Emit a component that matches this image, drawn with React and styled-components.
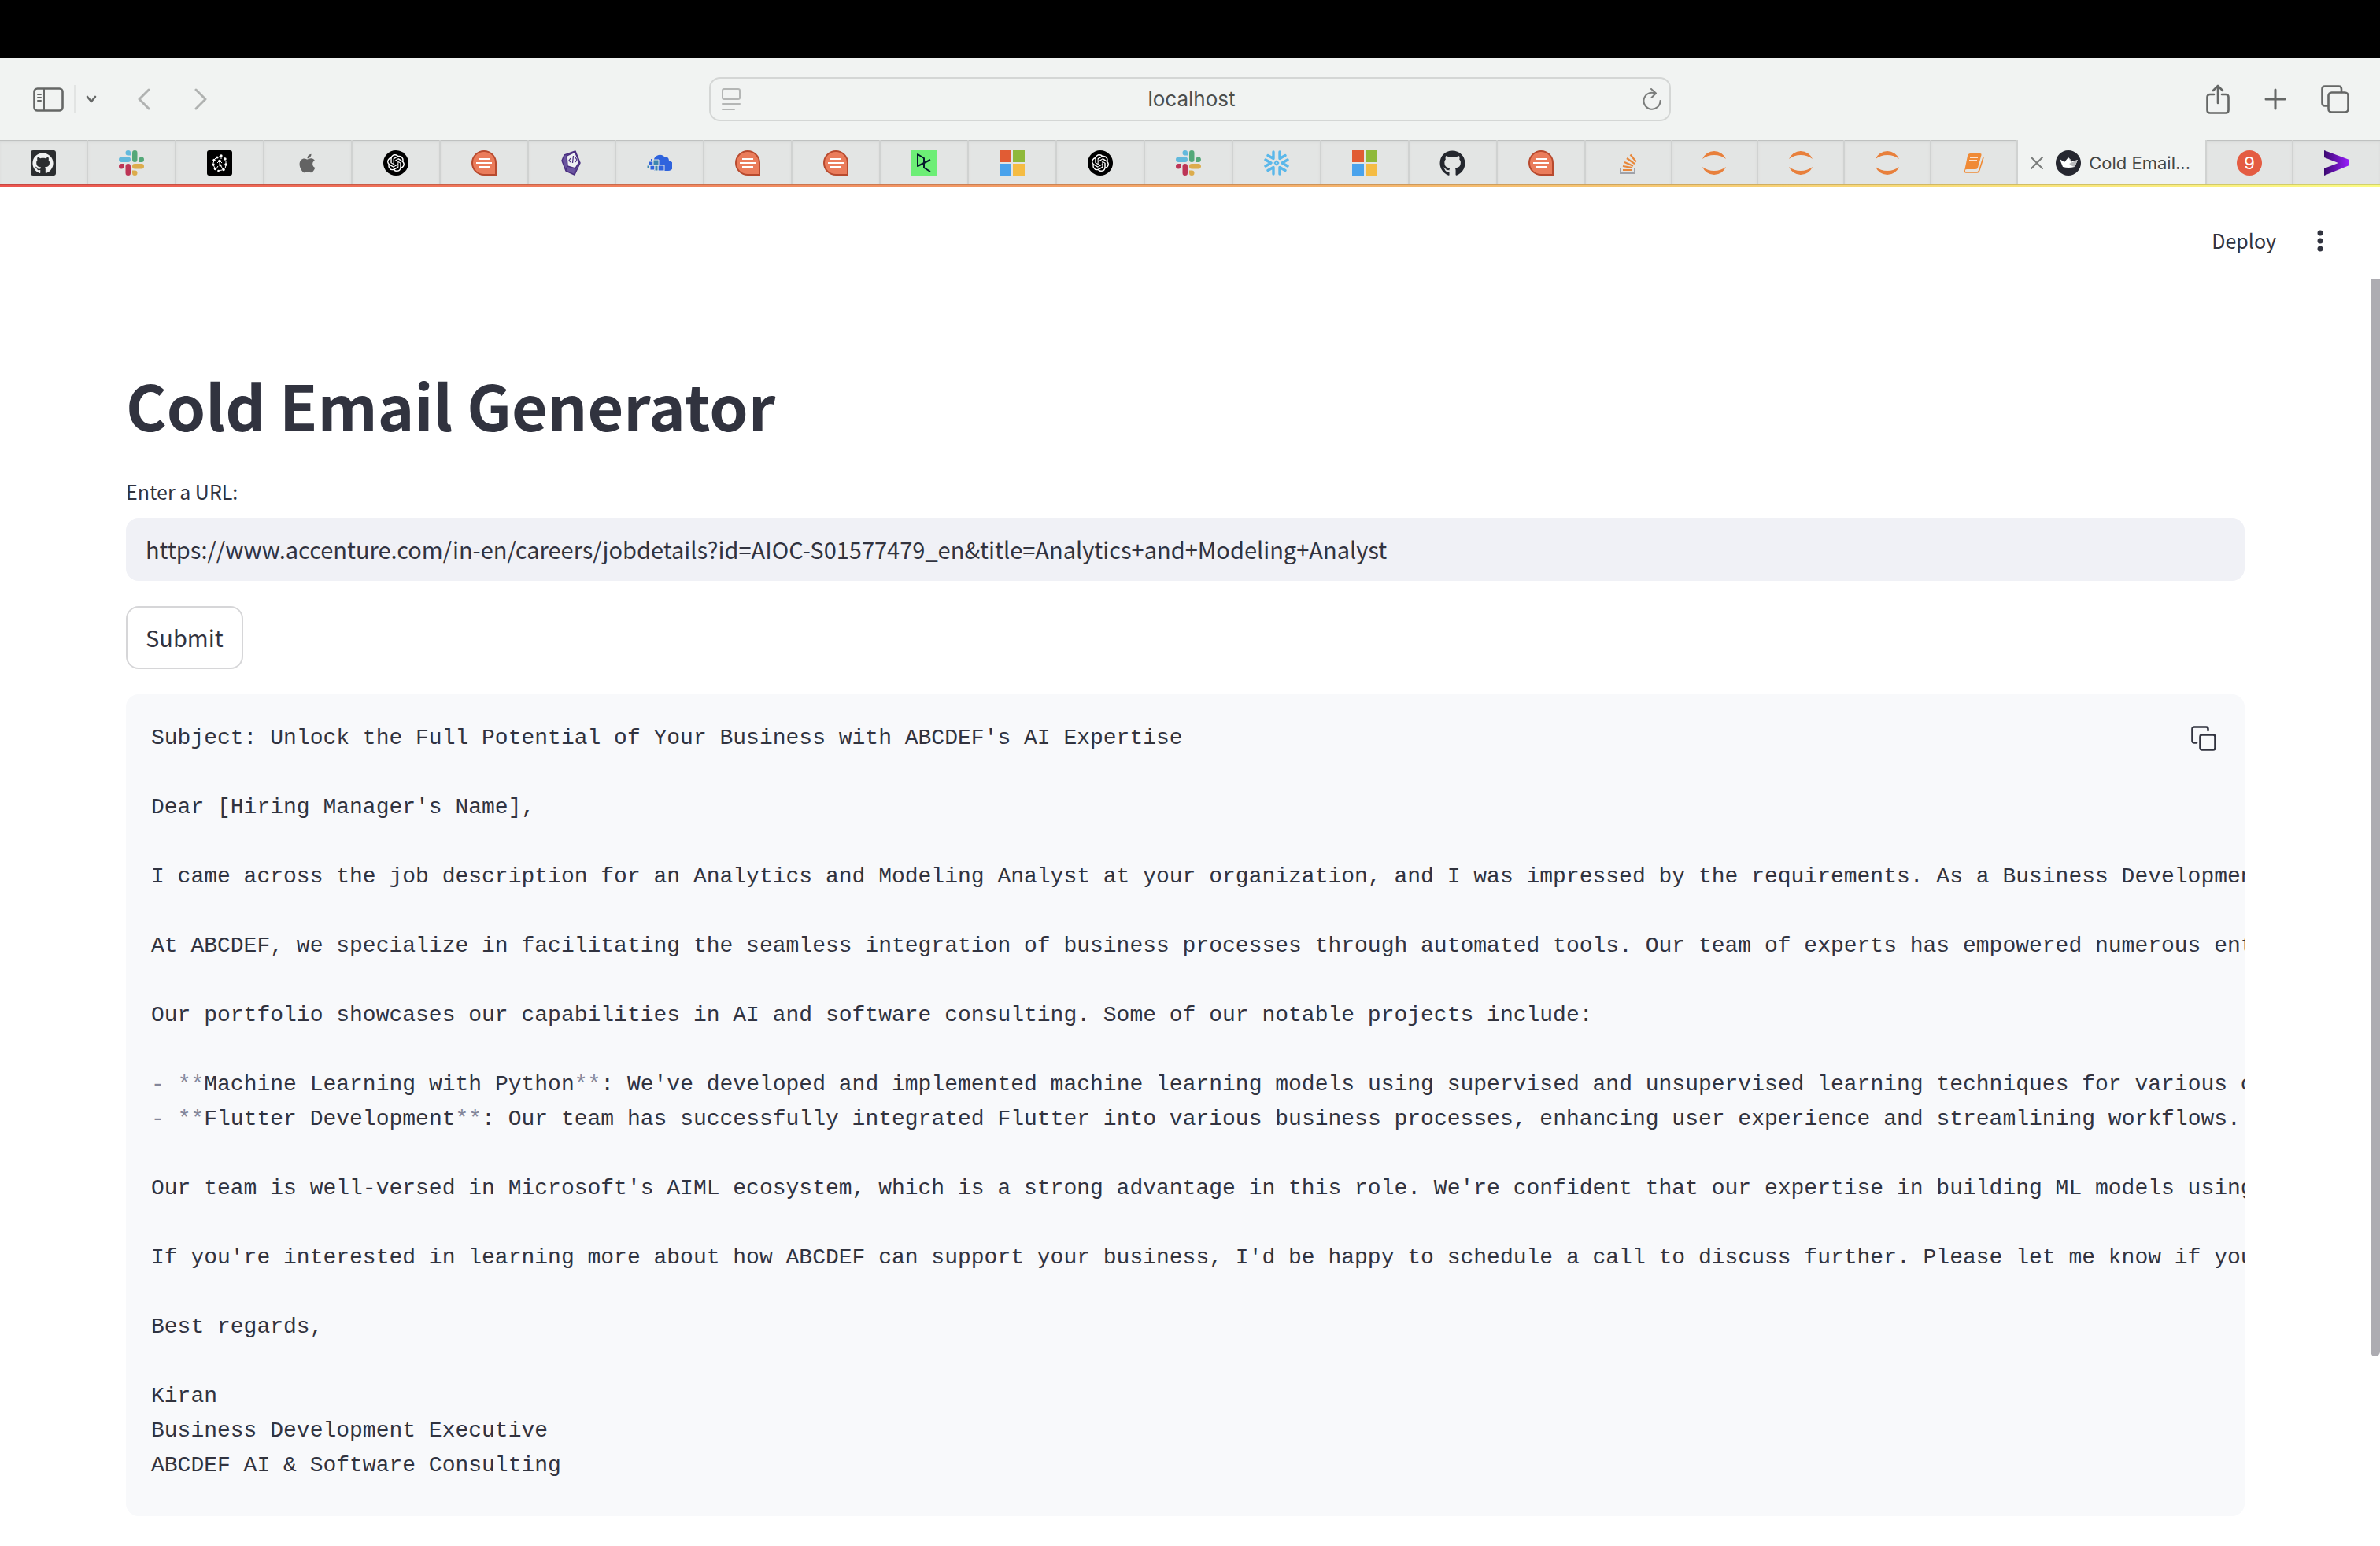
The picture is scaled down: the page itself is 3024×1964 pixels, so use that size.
import React from "react";
import styled, { createGlobalStyle } from "styled-components";
import { SiOpenai } from "react-icons/si";
import { FaApple, FaGithub } from "react-icons/fa";

const sans = `"Noto Sans CJK SC", "Open Sans", sans-serif`;
const system = `Inter, Roboto, sans-serif`;
const ink = "#31333f";

const GlobalStyle = createGlobalStyle`
  *, *::before, *::after { box-sizing: border-box; }
  body { margin: 0; background: #fff; color: ${ink}; font-family: ${sans}; }
  button, input, code { font: inherit; color: inherit; }
  svg { display: block; flex: none; }
`;

const Window = styled.div`
  display: flex;
  flex-direction: column;
  min-height: 100vh;
`;

const MenuBar = styled.div`
  height: 74px;
  background: #000;
`;

const Toolbar = styled.header`
  display: grid;
  grid-template-columns: 1fr minmax(0, 1222px) 1fr;
  align-items: center;
  height: 104px;
  background: #f1f3f2;
  color: #656766;
`;

const ToolGroup = styled.div`
  display: flex;
  align-items: center;
  justify-content: ${(p) => (p.$end ? "flex-end" : "flex-start")};
  gap: ${(p) => p.$gap}px;
  padding: 0 ${(p) => (p.$end ? 39 : 0)}px 0 ${(p) => (p.$end ? 0 : 42)}px;
`;

const IconButton = styled.button`
  display: flex;
  align-items: center;
  justify-content: center;
  padding: 0;
  border: 0;
  background: none;
  color: ${(p) => p.$color || "inherit"};
`;

const SidebarControl = styled.div`
  display: flex;
  align-items: center;
  gap: 13px;
`;

const HistoryControl = styled.div`
  display: flex;
  align-items: center;
  gap: 56px;
`;

const Divider = styled.span`
  width: 2px;
  height: 36px;
  background: #e2e4e3;
`;

const AddressBar = styled.div`
  display: flex;
  align-items: center;
  height: 56px;
  padding: 0 10px 0 14px;
  border: 2px solid #d4d6d5;
  border-radius: 14px;
`;

const AddressInput = styled.input`
  flex: 1;
  min-width: 0;
  padding: 0;
  border: 0;
  outline: 0;
  background: none;
  color: #4c4e4d;
  font-family: ${system};
  font-size: 26px;
  line-height: 32px;
  text-align: center;
`;

const TabStrip = styled.nav`
  display: flex;
  height: 56px;
  background: #e3e5e4;
`;

const Tab = styled.div`
  display: flex;
  align-items: center;
  justify-content: center;
  flex: 1 1 ${(p) => p.$basis}px;
  min-width: 0;
  padding-top: 2px;
  border-right: 2px solid #d0d2d1;
  box-shadow: inset 0 1px #bfc1c0, inset 0 3px 3px #d9dbda;
  &:last-child { border-right: 0; }
`;

const ActiveTab = styled(Tab)`
  flex: 0 0 240px;
  justify-content: flex-start;
  gap: 16px;
  padding-left: 16px;
  background: #f1f3f2;
  box-shadow: none;
`;

const TabLabel = styled.button`
  display: flex;
  align-items: center;
  gap: 10px;
  padding: 0;
  border: 0;
  background: none;
  color: #454746;
  font-family: ${system};
  font-size: 22px;
  line-height: 28px;
  white-space: nowrap;
`;

const Tile = styled.span`
  display: flex;
  align-items: center;
  justify-content: center;
  width: 32px;
  height: 32px;
  border-radius: ${(p) => p.$radius}px;
  background: ${(p) => p.$bg};
  color: ${(p) => p.$color || "#fff"};
  font-family: ${system};
  font-size: 22px;
  line-height: 32px;
`;

const Decoration = styled.div`
  height: 4px;
  background: linear-gradient(90deg, #ec554f, #fbfb82);
  box-shadow: inset 0 1px rgba(0, 0, 0, 0.16);
`;

const AppHeader = styled.header`
  display: flex;
  align-items: center;
  justify-content: flex-end;
  gap: 40px;
  height: 116px;
  padding: 20px 60px 0 0;
`;

const DeployButton = styled.button`
  padding: 0 0 2px;
  border: 0;
  background: none;
  font-size: 25px;
  line-height: 40px;
`;

const Scroller = styled.div`
  display: flex;
  flex: 1;
`;

const Content = styled.main`
  display: flex;
  flex-direction: column;
  flex: 1;
  min-width: 0;
  gap: 32px;
  padding: 112px 160px 38px;
`;

const ScrollRail = styled.div`
  flex: none;
  width: 12px;
`;

const ScrollThumb = styled.div`
  height: 85%;
  border-radius: 0 0 6px 6px;
  background: #adacb2;
`;

const Title = styled.h1`
  margin: 0 0 10px;
  font-size: 79px;
  line-height: 96px;
  font-weight: 700;
`;

const Field = styled.div`
  display: flex;
  flex-direction: column;
  gap: 14px;
`;

const FieldLabel = styled.label`
  font-size: 25px;
  line-height: 40px;
`;

const UrlInput = styled.input`
  width: 100%;
  height: 80px;
  padding: 0 25px 2px;
  border: 0;
  border-radius: 16px;
  outline: 0;
  background: #f0f1f6;
  font-size: 29px;
`;

const SubmitButton = styled.button`
  align-self: flex-start;
  height: 80px;
  padding: 0 23px 2px;
  border: 2px solid #d6d6d8;
  border-radius: 16px;
  background: #fff;
  font-size: 29px;
  line-height: 44px;
`;

const CodeBlock = styled.section`
  position: relative;
  border-radius: 16px;
  background: #f8f9fb;
`;

const Code = styled.pre`
  margin: 0;
  padding: 34px 0 42px 32px;
  overflow: hidden;
  font-family: "Liberation Mono", monospace;
  font-size: 28px;
  line-height: 44px;
`;

const Mark = styled.span`
  color: #83869a;
`;

const CopyButton = styled(IconButton)`
  position: absolute;
  top: 40px;
  right: 36px;
`;

const Icon = ({ w, h, sw = 2.6, children }) => (
  <svg
    width={w}
    height={h}
    viewBox={`0 0 ${w} ${h}`}
    fill="none"
    stroke="currentColor"
    strokeWidth={sw}
    strokeLinecap="round"
    strokeLinejoin="round"
    aria-hidden="true"
  >
    {children}
  </svg>
);

const Logo = ({ children }) => (
  <svg width="32" height="32" viewBox="0 0 32 32" fill="none" aria-hidden="true">
    {children}
  </svg>
);

const GithubTile = () => (
  <Tile $bg="#2b2d2f" $radius={3} $color="#f0f1f1">
    <FaGithub size={27} />
  </Tile>
);

const OpenAi = () => (
  <Tile $bg="#000" $radius={16}>
    <SiOpenai size={22} />
  </Tile>
);

const Slack = () => (
  <Logo>
    <g fill="#62b9dc">
      <rect y="8.5" width="15" height="6.5" rx="3.25" />
      <path d="M15 6.5h-3.25A3.25 3.25 0 1 1 15 3.25z" />
    </g>
    <g fill="#54a878">
      <rect x="17" width="6.5" height="15" rx="3.25" />
      <path d="M25.5 15v-3.25A3.25 3.25 0 1 1 28.75 15z" />
    </g>
    <g fill="#bd3556">
      <rect x="8.5" y="17" width="6.5" height="15" rx="3.25" />
      <path d="M6.5 17v3.25A3.25 3.25 0 1 1 3.25 17z" />
    </g>
    <g fill="#dcac4c">
      <rect x="17" y="17" width="15" height="6.5" rx="3.25" />
      <path d="M17 25.5h3.25A3.25 3.25 0 1 1 17 28.75z" />
    </g>
  </Logo>
);

const Network = () => (
  <Logo>
    <rect width="32" height="32" rx="3" fill="#000" />
    <g stroke="#fff" strokeWidth="1">
      <path d="M18 7v4M14 9l3-2M9 12l3-3M9 13l-1 3M16 14v4M21 9l3 2M24 13v4M24 19l-1 4M8 18l2 5M12 23l2-3M13 16l3-3 3 3M18 20l2 4M14 26l5-1" />
    </g>
    <g fill="#fff">
      <circle cx="18" cy="7" r="1.7" />
      <circle cx="13" cy="9" r="1.5" />
      <circle cx="23" cy="11" r="1.7" />
      <circle cx="9" cy="12.5" r="1.7" />
      <circle cx="16" cy="13.5" r="1.8" />
      <circle cx="8" cy="18" r="1.7" />
      <circle cx="24" cy="18" r="1.8" />
      <circle cx="17" cy="19" r="1.6" />
      <circle cx="10.5" cy="23.5" r="1.8" />
      <circle cx="21" cy="24.5" r="1.8" />
      <circle cx="14.5" cy="26" r="1.3" />
    </g>
  </Logo>
);

const Chat = () => (
  <Logo>
    <path d="M31 31H16A15 15 0 1 1 31 16z" fill="#ea7c5b" stroke="#b84a2e" strokeWidth="2" />
    <path d="M9 11h14M6 16h20M9 21h14" stroke="#fff" strokeWidth="2" />
  </Logo>
);

const Crystal = () => (
  <Logo>
    <path d="M21 1l6 15-7 15-11-5-5-13 3-7z" fill="#6b55a0" stroke="#4a2f80" strokeWidth="1.5" strokeLinejoin="round" />
    <path d="M20.500 2L26 15l-5 8-10-3-1-13z" fill="#eef0f2" stroke="#4a2f80" strokeWidth="1.5" strokeLinejoin="round" />
    <path d="M15 10l-2 3 2 2M18.500 7l-1 9M21 9l2 3-2 3M11 20l-2 5M21 23l-1 7" stroke="#4a2f80" strokeWidth="1.3" />
  </Logo>
);

const Cloud = () => (
  <Logo>
    <path d="M9 11a8 8 0 0 1 13-3 5 5 0 0 1 6 5 6.500 6.500 0 0 1-2 13H9z" fill="#2f63dd" />
    <g stroke="#e3e5e4" strokeWidth="1">
      <path d="M2 14h6v5H2zM4 19h6v6H4zM14 19h8v7h-8z" fill="#2f63dd" />
      <path d="M8 12h7v7H8zM10 19h4v7h-4zM0 19h3v4H0z" fill="#3d86b0" />
    </g>
    <path d="M5 11h2v2H5z" fill="#2f63dd" />
  </Logo>
);

const DataCamp = () => (
  <Logo>
    <path d="M0 0h32v32H0z" fill="#6dee76" />
    <path d="M24 12L8 20V5l8 5v12l8 5" stroke="#05192d" strokeWidth="2" strokeLinejoin="round" />
  </Logo>
);

const Microsoft = () => (
  <Logo>
    <path d="M0 0h15v15H0z" fill="#e15c34" />
    <path d="M17 0h15v15H17z" fill="#8fb93a" />
    <path d="M0 17h15v15H0z" fill="#4aa3ec" />
    <path d="M17 17h15v15H17z" fill="#f5bc43" />
  </Logo>
);

const Snowflake = () => (
  <Logo>
    <g stroke="#5bb8ea" strokeWidth="3.4" strokeLinecap="round" strokeLinejoin="round">
      <path d="M12 2v8.500L5 6.500M20 2v8.500l7-4M12 30v-8.500l-7 4M20 30v-8.500l7 4M2 12l7 4-7 4M30 12l-7 4 7 4" />
    </g>
    <path d="M16 13.500l2.500 2.500-2.500 2.500-2.500-2.500z" stroke="#5bb8ea" strokeWidth="1.8" strokeLinejoin="round" />
  </Logo>
);

const StackOverflow = () => (
  <Logo>
    <path d="M6 22v7h18v-7" stroke="#a0a2a9" strokeWidth="2" />
    <path d="M9 25h12M9 20l12 2.200M11 15l11 4.800M14 10l10 7.200M18.500 5.500l7.300 9" stroke="#e8873a" strokeWidth="2.2" />
  </Logo>
);

const Jupyter = () => (
  <Logo>
    <path d="M1 11a16.250 16.250 0 0 1 30 0a25 25 0 0 0-30 0z" fill="#e8803c" />
    <path d="M1 21a16.250 16.250 0 0 0 30 0a25 25 0 0 1-30 0z" fill="#e8803c" />
  </Logo>
);

const Book = () => (
  <Logo>
    <path d="M11 4h13q2 0 1.500 2L21 22q-.5 2-3 2H7q-2 0-3 2L8 7q1-3 3-3z" fill="#f08a35" />
    <path d="M11 9h10M10 13h10" stroke="#fff" strokeWidth="1.6" />
    <path d="M4 25q0 3 2 3h14q2 0 3-3l5-16" stroke="#f08a35" strokeWidth="1.6" />
  </Logo>
);

const Crown = () => (
  <Logo>
    <circle cx="16" cy="16" r="16" fill="#262730" />
    <path d="M5 11l6 4 5-6 5 5 7-2-4 9q-8 2-15 0z" fill="#fff" />
    <path d="M16 9l5 5-1 2zM28 12l-4 9-3-1-4-3z" fill="#b9babd" />
  </Logo>
);

const Chevron = () => (
  <Logo>
    <defs>
      <linearGradient id="violet">
        <stop offset="0" stopColor="#3c0a70" />
        <stop offset="1" stopColor="#9a1cff" />
      </linearGradient>
    </defs>
    <path d="M0 0l32 12v7L0 32v-9l18-7L0 9z" fill="url(#violet)" />
  </Logo>
);

const Apple = () => (
  <Tile $bg="none" $color="#636363">
    <FaApple size={27} />
  </Tile>
);

const Github = () => (
  <Tile $bg="none" $color="#24272e">
    <FaGithub size={33} />
  </Tile>
);

const wideTabs = [
  GithubTile, Slack, Network, Apple, OpenAi, Chat, Crystal, Cloud, Chat, Chat,
  DataCamp, Microsoft, OpenAi, Slack, Snowflake, Microsoft, Github, Chat,
];
const narrowTabs = [StackOverflow, Jupyter, Jupyter, Jupyter, Book];

const BrowserToolbar = () => (
  <Toolbar>
    <ToolGroup $gap={52}>
      <SidebarControl>
        <IconButton aria-label="Show sidebar">
          <Icon w={39} h={31}>
            <rect x="1.5" y="1.5" width="36" height="28" rx="4" />
            <path d="M14 2v27M6 9h4M6 13h4M6 17h4" strokeWidth="2" />
          </Icon>
        </IconButton>
        <Divider />
        <IconButton aria-label="Tab groups">
          <Icon w={14} h={10}>
            <path d="M2 2l5 6 5-6" />
          </Icon>
        </IconButton>
      </SidebarControl>
      <HistoryControl>
        <IconButton aria-label="Back" $color="#b0b2b1">
          <Icon w={16} h={28} sw={3}>
            <path d="M14 2L2 14l12 12" />
          </Icon>
        </IconButton>
        <IconButton aria-label="Forward" $color="#b0b2b1">
          <Icon w={16} h={28} sw={3}>
            <path d="M2 2l12 12L2 26" />
          </Icon>
        </IconButton>
      </HistoryControl>
    </ToolGroup>
    <AddressBar>
      <IconButton aria-label="Page menu" $color="#b4b6b5">
        <Icon w={24} h={28} sw={2}>
          <rect x="1" y="1" width="22" height="13" rx="2" />
          <path d="M1 20h22M1 27h15" />
        </Icon>
      </IconButton>
      <AddressInput aria-label="Address" defaultValue="localhost" />
      <IconButton aria-label="Reload" $color="#7a7c7b">
        <Icon w={24} h={28} sw={2}>
          <path d="M16 6.500A10.500 10.500 0 1 0 22.500 16M11 1l6 5.500-5.500 5.500" />
        </Icon>
      </IconButton>
    </AddressBar>
    <ToolGroup $gap={44} $end>
      <IconButton aria-label="Share">
        <Icon w={30} h={38}>
          <path d="M10 13H5q-3.500 0-3.500 3.500V33q0 3.500 3.500 3.500h20q3.500 0 3.500-3.500V16.500Q28.500 13 25 13h-5M15 24V2M9 8l6-6 6 6" />
        </Icon>
      </IconButton>
      <IconButton aria-label="New tab">
        <Icon w={28} h={28} sw={3}>
          <path d="M14 2v24M2 14h24" />
        </Icon>
      </IconButton>
      <IconButton aria-label="Tab overview">
        <Icon w={36} h={36}>
          <rect x="9.5" y="9.5" width="25" height="25" rx="4" />
          <path d="M9 26.500H5q-3.500 0-3.500-3.500V5q0-3.500 3.500-3.500h17.500Q26 1.500 26 5v4" />
        </Icon>
      </IconButton>
    </ToolGroup>
  </Toolbar>
);

const Tabs = () => (
  <TabStrip aria-label="Open tabs">
    {wideTabs.map((Favicon, i) => (
      <Tab key={i} $basis={112}>
        <Favicon />
      </Tab>
    ))}
    {narrowTabs.map((Favicon, i) => (
      <Tab key={i} $basis={110}>
        <Favicon />
      </Tab>
    ))}
    <ActiveTab>
      <IconButton aria-label="Close tab" $color="#7a7c7b">
        <Icon w={16} h={16} sw={2}>
          <path d="M1 1l14 14M15 1L1 15" />
        </Icon>
      </IconButton>
      <TabLabel>
        <Crown />
        Cold Email...
      </TabLabel>
    </ActiveTab>
    <Tab $basis={110}>
      <Tile $bg="#e45c42" $radius={16}>9</Tile>
    </Tab>
    <Tab $basis={110}>
      <Chevron />
    </Tab>
  </TabStrip>
);

const Bullet = ({ name, children }) => (
  <>
    <Mark>-</Mark> <Mark>**</Mark>
    {name}
    <Mark>**</Mark>
    {children}
  </>
);

const Email = () => (
  <code>
    {`Subject: Unlock the Full Potential of Your Business with ABCDEF's AI Expertise

Dear [Hiring Manager's Name],

I came across the job description for an Analytics and Modeling Analyst at your organization, and I was impressed by the requirements. As a Business Development

At ABCDEF, we specialize in facilitating the seamless integration of business processes through automated tools. Our team of experts has empowered numerous enterprises

Our portfolio showcases our capabilities in AI and software consulting. Some of our notable projects include:

`}
    <Bullet name="Machine Learning with Python">
      {": We've developed and implemented machine learning models using supervised and unsupervised learning techniques for various clients.\n"}
    </Bullet>
    <Bullet name="Flutter Development">
      {": Our team has successfully integrated Flutter into various business processes, enhancing user experience and streamlining workflows.\n"}
    </Bullet>
    {`
Our team is well-versed in Microsoft's AIML ecosystem, which is a strong advantage in this role. We're confident that our expertise in building ML models using

If you're interested in learning more about how ABCDEF can support your business, I'd be happy to schedule a call to discuss further. Please let me know if you

Best regards,

Kiran
Business Development Executive
ABCDEF AI & Software Consulting`}
  </code>
);

export default function App() {
  return (
    <Window>
      <GlobalStyle />
      <MenuBar />
      <BrowserToolbar />
      <Tabs />
      <Decoration />
      <AppHeader>
        <DeployButton>Deploy</DeployButton>
        <IconButton aria-label="Main menu">
          <svg width="32" height="28" viewBox="0 0 32 28" fill="currentColor" aria-hidden="true">
            <circle cx="16" cy="4" r="3.5" />
            <circle cx="16" cy="14" r="3.5" />
            <circle cx="16" cy="24" r="3.5" />
          </svg>
        </IconButton>
      </AppHeader>
      <Scroller>
        <Content>
          <Title>Cold Email Generator</Title>
          <Field>
            <FieldLabel htmlFor="job-url">Enter a URL:</FieldLabel>
            <UrlInput
              id="job-url"
              defaultValue="https://www.accenture.com/in-en/careers/jobdetails?id=AIOC-S01577479_en&title=Analytics+and+Modeling+Analyst"
            />
          </Field>
          <SubmitButton>Submit</SubmitButton>
          <CodeBlock>
            <Code>
              <Email />
            </Code>
            <CopyButton aria-label="Copy to clipboard">
              <Icon w={32} h={32}>
                <rect x="11.5" y="11.5" width="19" height="19" rx="2.5" />
                <path d="M7 21.500H4q-2.500 0-2.500-2.500V4q0-2.500 2.500-2.500h15q2.500 0 2.500 2.500v2" />
              </Icon>
            </CopyButton>
          </CodeBlock>
        </Content>
        <ScrollRail>
          <ScrollThumb />
        </ScrollRail>
      </Scroller>
    </Window>
  );
}
